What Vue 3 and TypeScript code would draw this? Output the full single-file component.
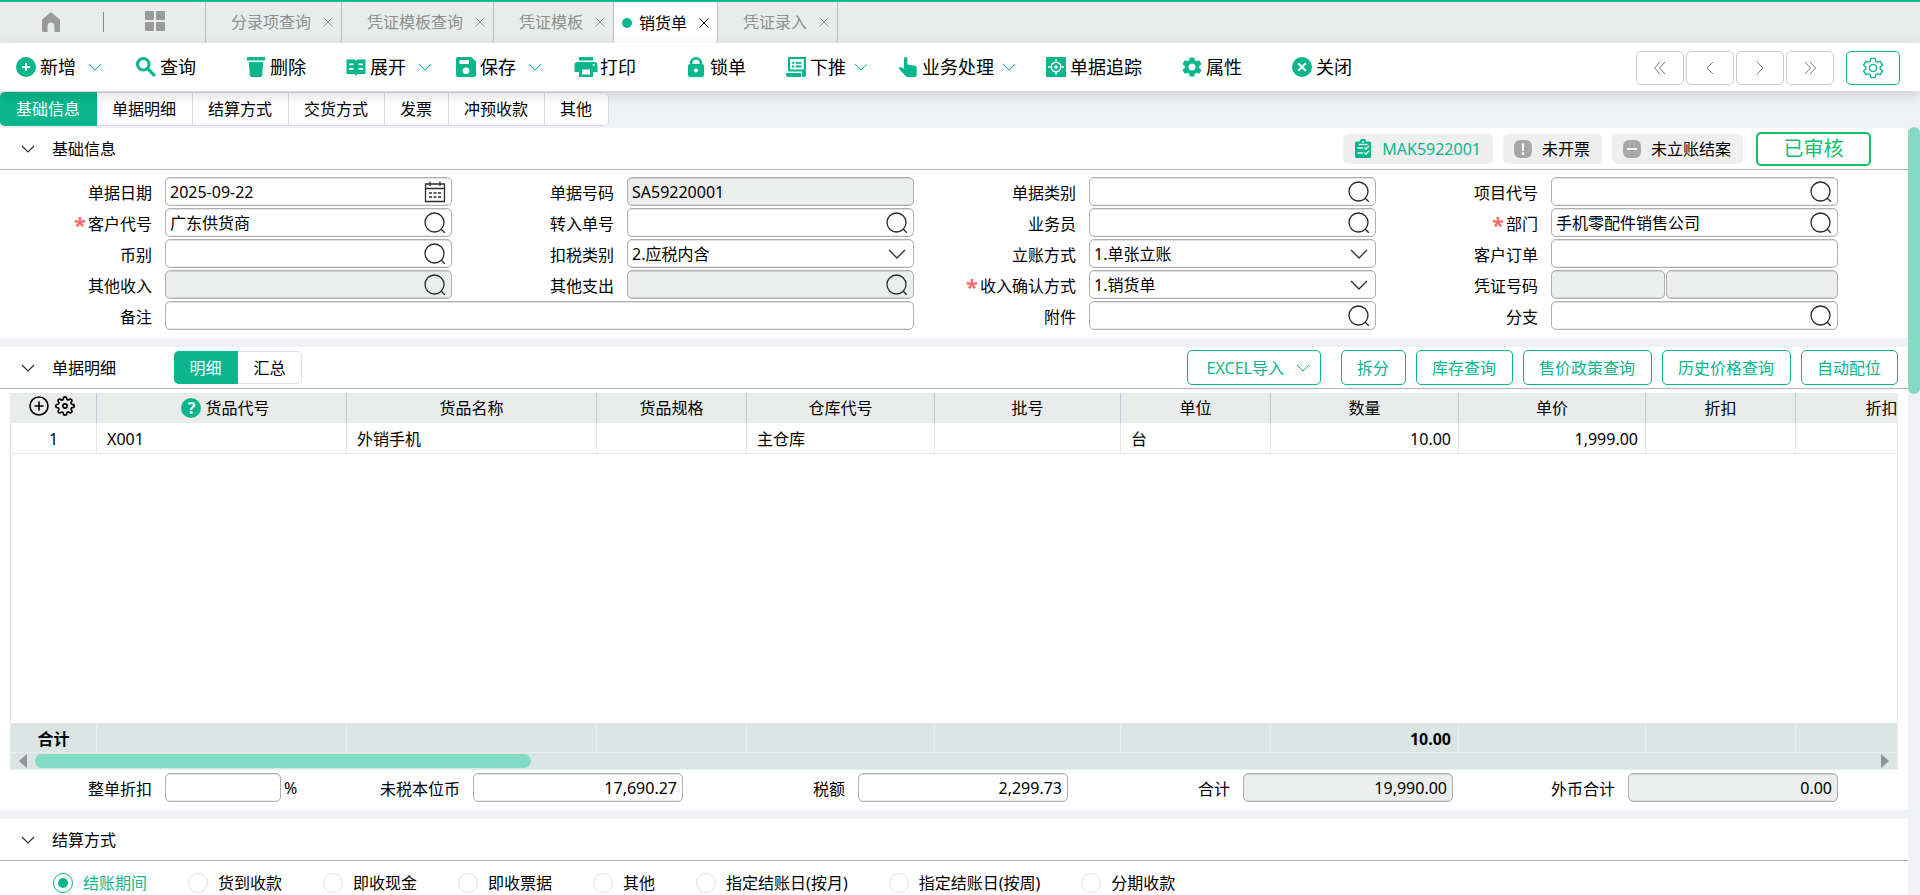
<script setup lang="ts">
import { ref } from 'vue'

interface PageTab { title: string; active?: boolean }
interface Tool { label: string; icon: string; space: string; chevron?: 'wide' | 'narrow' }
interface Field {
  id: string
  label: string
  value?: string
  kind?: 'text' | 'search' | 'date' | 'select' | 'pair'
  required?: boolean
  disabled?: boolean
  wide?: boolean
}
interface Column { title: string; width: number; value: string; align?: 'right' | 'center'; total?: string; help?: boolean }

const pageTabs: PageTab[] = [
  { title: '分录项查询' },
  { title: '凭证模板查询' },
  { title: '凭证模板' },
  { title: '销货单', active: true },
  { title: '凭证录入' },
]

const tools: Tool[] = [
  { label: '新增', icon: 'add', space: 'm', chevron: 'wide' },
  { label: '查询', icon: 'search', space: 'xl' },
  { label: '删除', icon: 'remove', space: 'l' },
  { label: '展开', icon: 'expand', space: 'xs', chevron: 'wide' },
  { label: '保存', icon: 'save', space: 'm', chevron: 'wide' },
  { label: '打印', icon: 'print', space: 'xl' },
  { label: '锁单', icon: 'lock', space: 'l' },
  { label: '下推', icon: 'push', space: 's', chevron: 'narrow' },
  { label: '业务处理', icon: 'hand', space: 's', chevron: 'narrow' },
  { label: '单据追踪', icon: 'track', space: 'l' },
  { label: '属性', icon: 'gear', space: 'xl' },
  { label: '关闭', icon: 'close', space: 'xs' },
]

const gearPath =
  'M19.14 12.94c.04-.3.06-.61.06-.94 0-.32-.02-.64-.07-.94l2.03-1.58c.18-.14.23-.41.12-.61l-1.92-3.32c-.12-.22-.37-.29-.59-.22l-2.39.96c-.5-.38-1.03-.7-1.62-.94l-.36-2.54c-.04-.24-.24-.41-.48-.41h-3.84c-.24 0-.43.17-.47.41l-.36 2.54c-.59.24-1.13.57-1.62.94l-2.39-.96c-.22-.08-.47 0-.59.22L2.74 8.87c-.12.21-.08.47.12.61l2.03 1.58c-.05.3-.09.63-.09.94s.02.64.07.94l-2.03 1.58c-.18.14-.23.41-.12.61l1.92 3.32c.12.22.37.29.59.22l2.39-.96c.5.38 1.03.7 1.62.94l.36 2.54c.05.24.24.41.48.41h3.84c.24 0 .44-.17.47-.41l.36-2.54c.59-.24 1.13-.56 1.62-.94l2.39.96c.22.08.47 0 .59-.22l1.92-3.32c.12-.22.07-.47-.12-.61l-2.01-1.58zM12 15.6c-1.98 0-3.6-1.62-3.6-3.6s1.62-3.6 3.6-3.6 3.6 1.62 3.6 3.6-1.62 3.6-3.6 3.6z'

const icons: Record<string, string[]> = {
  add: ['M12 2a10 10 0 1 0 0 20a10 10 0 0 0 0-20zM11 8h2v3h3v2h-3v3h-2v-3H8v-2h3z'],
  search: [
    'M9.3 2a7.3 7.3 0 1 0 0 14.6a7.3 7.3 0 0 0 0-14.6zM9.3 5a4.3 4.3 0 1 1 0 8.6a4.3 4.3 0 0 1 0-8.6z',
    'M14.8 12.5l7.2 7.3-2.2 2.2-7.3-7.2z',
  ],
  remove: ['M3 2h18v3.5H3z', 'M4.8 7h14.4l-1 13a2 2 0 0 1-2 2H7.8a2 2 0 0 1-2-2z'],
  expand: [
    'M2.5 4.5h8L12 5.8l1.5-1.3h8v14.5h-8L12 21l-1.5-2h-8zM5 8.5v1.8h4.5V8.5zM5 13v1.8h4.5V13zM14.5 8.5v1.8H19V8.5zM14.5 13v1.8H19V13z',
  ],
  save: [
    'M4 2h13.5L22 6.5V20a2 2 0 0 1-2 2H4a2 2 0 0 1-2-2V4a2 2 0 0 1 2-2zM5.5 5v4h9.5V5zM12 12.5a3.3 3.3 0 1 0 0 6.6a3.3 3.3 0 0 0 0-6.6z',
  ],
  print: [
    'M5 2h14v3.5H5z',
    'M3.5 7h17a3 3 0 0 1 3 3v7H19v5H5v-5H.5v-7a3 3 0 0 1 3-3zM8 14.5v5h8v-5zM18.8 9v1.8h1.8V9z',
  ],
  lock: [
    'M6 9h12a2 2 0 0 1 2 2v9a2 2 0 0 1-2 2H6a2 2 0 0 1-2-2v-9a2 2 0 0 1 2-2zM12 13.5a2 2 0 1 0 0 4a2 2 0 0 0 0-4z',
    'M5.8 9V8.2a6.2 6.2 0 0 1 12.4 0V9h-2.6v-.8a3.6 3.6 0 0 0-7.2 0V9z',
  ],
  push: [
    'M4 2h18v18a2 2 0 0 1-2 2h-2v-5.5H4zM6.2 4v10.5h13.6V4z',
    'M2 18h15v4H4a2 2 0 0 1-2-2z',
    'M8 7h2v1.8H8zM11.5 7h6v1.8h-6zM8 10.6h2v1.8H8zM11.5 10.6h6v1.8h-6z',
  ],
  hand: [
    'M8 3.7a1.7 1.7 0 0 1 3.4 0V9.5l7.6 1.2a2 2 0 0 1 1.7 2.1V20a2 2 0 0 1-2 2h-7.2a2.5 2.5 0 0 1-1.9-.9L3.3 14.3a1.4 1.4 0 0 1 1.7-2.1L8 13.8z',
  ],
  track: [
    'M2 2h20v20H2zM12 6.5a5.5 5.5 0 1 0 0 11a5.5 5.5 0 0 0 0-11zM12 8a4 4 0 1 1 0 8a4 4 0 0 1 0-8zM12 9.8L9.8 12l2.2 2.2 2.2-2.2zM11.3 4v2.5h1.4V4zM11.3 17.5V20h1.4v-2.5zM4 11.3v1.4h2.5v-1.4zM17.5 11.3v1.4H20v-1.4z',
  ],
  gear: [gearPath],
  close: [
    'M12 2a10 10 0 1 0 0 20a10 10 0 0 0 0-20zM8.9 7.5L12 10.6l3.1-3.1 1.4 1.4-3.1 3.1 3.1 3.1-1.4 1.4-3.1-3.1-3.1 3.1-1.4-1.4 3.1-3.1-3.1-3.1z',
  ],
}

const anchors = ['基础信息', '单据明细', '结算方式', '交货方式', '发票', '冲预收款', '其他']
const activeAnchor = ref('基础信息')

const pagers = [
  { label: '首张', d: 'M8 2L2.5 8L8 14M13 2L7.5 8L13 14' },
  { label: '上一张', d: 'M11 2L5 8L11 14' },
  { label: '下一张', d: 'M5 2L11 8L5 14' },
  { label: '末张', d: 'M3 2L8.5 8L3 14M8 2L13.5 8L8 14' },
]

const fields = ref<Field[]>([
  { id: 'bill-date', label: '单据日期', kind: 'date', value: '2025-09-22' },
  { id: 'bill-no', label: '单据号码', value: 'SA59220001', disabled: true },
  { id: 'bill-type', label: '单据类别', kind: 'search' },
  { id: 'project', label: '项目代号', kind: 'search' },
  { id: 'customer', label: '客户代号', kind: 'search', value: '广东供货商', required: true },
  { id: 'source-no', label: '转入单号', kind: 'search' },
  { id: 'salesman', label: '业务员', kind: 'search' },
  { id: 'department', label: '部门', kind: 'search', value: '手机零配件销售公司', required: true },
  { id: 'currency', label: '币别', kind: 'search' },
  { id: 'tax-type', label: '扣税类别', kind: 'select', value: '2.应税内含' },
  { id: 'account-mode', label: '立账方式', kind: 'select', value: '1.单张立账' },
  { id: 'customer-order', label: '客户订单' },
  { id: 'other-income', label: '其他收入', kind: 'search', disabled: true },
  { id: 'other-expense', label: '其他支出', kind: 'search', disabled: true },
  { id: 'income-confirm', label: '收入确认方式', kind: 'select', value: '1.销货单', required: true },
  { id: 'voucher', label: '凭证号码', kind: 'pair', disabled: true },
  { id: 'remark', label: '备注', wide: true },
  { id: 'attachment', label: '附件', kind: 'search' },
  { id: 'branch', label: '分支', kind: 'search' },
])

const columns: Column[] = [
  { title: '货品代号', width: 250, value: 'X001', help: true },
  { title: '货品名称', width: 250, value: '外销手机' },
  { title: '货品规格', width: 150, value: '' },
  { title: '仓库代号', width: 188, value: '主仓库' },
  { title: '批号', width: 186, value: '' },
  { title: '单位', width: 150, value: '台' },
  { title: '数量', width: 188, value: '10.00', align: 'right', total: '10.00' },
  { title: '单价', width: 187, value: '1,999.00', align: 'right' },
  { title: '折扣', width: 150, value: '' },
  { title: '折扣', width: 172, value: '' },
]

const detailActions = ['拆分', '库存查询', '售价政策查询', '历史价格查询', '自动配位']

const sums = ref([
  { id: 'untaxed', label: '未税本位币', value: '17,690.27', disabled: false },
  { id: 'tax', label: '税额', value: '2,299.73', disabled: false },
  { id: 'total', label: '合计', value: '19,990.00', disabled: true },
  { id: 'foreign', label: '外币合计', value: '0.00', disabled: true },
])
const discount = ref('')

const settlements = ['结账期间', '货到收款', '即收现金', '即收票据', '其他', '指定结账日(按月)', '指定结账日(按周)', '分期收款']
const settlement = ref('结账期间')
</script>

<template>
  <div class="page">
    <nav class="page-tabs">
      <button class="nav-icon home" aria-label="首页">
        <svg width="22" height="22" viewBox="0 0 22 22"><path d="M11 1L20 8.5V20a1 1 0 0 1-1 1h-4.5v-6a3.5 3.5 0 0 0-7 0v6H3a1 1 0 0 1-1-1V8.5z" /></svg>
      </button>
      <span class="nav-line"></span>
      <button class="nav-icon apps" aria-label="应用">
        <svg width="22" height="22" viewBox="0 0 22 22"><rect x="1" y="1" width="9" height="9" rx="1" /><rect x="12" y="1" width="9" height="9" rx="1" /><rect x="1" y="12" width="9" height="9" rx="1" /><rect x="12" y="12" width="9" height="9" rx="1" /></svg>
      </button>
      <div class="tab-list">
        <div v-for="tab in pageTabs" :key="tab.title" class="page-tab" :class="{ active: tab.active }">
          <span v-if="tab.active" class="dot"></span>
          <a href="#">{{ tab.title }}</a>
          <button class="tab-close" :aria-label="'关闭' + tab.title">
            <svg width="10" height="10" viewBox="0 0 10 10"><path d="M.5 .5l9 9M9.5 .5l-9 9" /></svg>
          </button>
        </div>
      </div>
    </nav>

    <header class="toolbar">
      <button v-for="tool in tools" :key="tool.label" class="tool" :class="'space-' + tool.space">
        <svg class="tool-icon" width="24" height="24" viewBox="0 0 24 24">
          <path v-for="d in icons[tool.icon]" :key="d" :d="d" fill-rule="evenodd" />
        </svg>
        <span>{{ tool.label }}</span>
        <svg v-if="tool.chevron" class="chevron" :class="tool.chevron" width="14" height="8" viewBox="0 0 14 8"><path d="M1 1l6 6 6-6" /></svg>
      </button>
      <div class="pagers">
        <button v-for="p in pagers" :key="p.label" class="pager" :aria-label="p.label">
          <svg width="16" height="16" viewBox="0 0 16 16"><path :d="p.d" /></svg>
        </button>
      </div>
      <button class="settings" aria-label="设置">
        <svg width="24" height="24" viewBox="0 0 24 24"><path :d="gearPath" /></svg>
      </button>
    </header>

    <main class="body">
      <div class="content">
        <div class="anchors">
          <button v-for="a in anchors" :key="a" :class="{ active: a === activeAnchor }" @click="activeAnchor = a">{{ a }}</button>
        </div>

        <section class="panel">
          <div class="panel-head">
            <button class="fold" aria-label="收起基础信息"><svg width="14" height="8" viewBox="0 0 14 8"><path d="M1 1l6 6 6-6" /></svg></button>
            <h2>基础信息</h2>
            <div class="badges">
              <a href="#" class="badge link">
                <svg width="18" height="20" viewBox="0 0 18 20">
                  <path fill-rule="evenodd" d="M6 2.5a3 3 0 0 1 6 0h3.5A1.5 1.5 0 0 1 17 4v13.5a1.5 1.5 0 0 1-1.5 1.5h-13A1.5 1.5 0 0 1 1 17.5V4a1.5 1.5 0 0 1 1.5-1.5zM8 2.2v1.5h2V2.2z" />
                  <path class="mark" d="M3.5 9H9M3.5 14H9M10.5 8.5l1.5 1.5 3-3M10.5 13.5l1.5 1.5 3-3" />
                  <path class="mark" d="M4.5 5.5h9" />
                </svg>
                <span>MAK5922001</span>
              </a>
              <span class="badge">
                <svg width="18" height="18" viewBox="0 0 18 18"><rect width="18" height="18" rx="6" fill="#a8a8a8" /><path d="M7.8 3.5h2.4l-.4 7.5H8.2z" fill="#fff" /><circle cx="9" cy="13.5" r="1.3" fill="#fff" /></svg>
                <span>未开票</span>
              </span>
              <span class="badge">
                <svg width="18" height="18" viewBox="0 0 18 18"><rect width="18" height="18" rx="6" fill="#a8a8a8" /><rect x="4" y="8" width="10" height="2" fill="#fff" /></svg>
                <span>未立账结案</span>
              </span>
              <span class="stamp">已审核</span>
            </div>
          </div>

          <form class="form-grid" @submit.prevent>
            <div v-for="f in fields" :key="f.id" class="field" :class="{ wide: f.wide }">
              <label :for="f.id"><span v-if="f.required" class="star">*</span>{{ f.label }}</label>
              <div v-if="f.kind === 'pair'" class="pair">
                <div class="box disabled"><input :id="f.id" type="text" disabled /></div>
                <div class="box disabled"><input type="text" :aria-label="f.label + '后段'" disabled /></div>
              </div>
              <div v-else-if="f.kind === 'select'" class="box choose">
                <select :id="f.id"><option>{{ f.value }}</option></select>
                <svg width="18" height="10" viewBox="0 0 18 10"><path d="M1 1l8 8 8-8" /></svg>
              </div>
              <div v-else class="box" :class="{ disabled: f.disabled }">
                <input :id="f.id" v-model="f.value" type="text" :disabled="f.disabled" />
                <button v-if="f.kind === 'search'" type="button" :aria-label="'选择' + f.label">
                  <svg width="22" height="22" viewBox="0 0 22 22"><circle cx="10.5" cy="10.5" r="9.5" /><path d="M17.3 17.3l3.5 3.5" /></svg>
                </button>
                <button v-if="f.kind === 'date'" type="button" :aria-label="'选择' + f.label">
                  <svg width="22" height="22" viewBox="0 0 22 22"><path d="M1.5 3h19v17.5h-19zM1.5 7.5h19M6 .5v4.5M16 .5v4.5" /><path stroke-dasharray="3 1.5" d="M5 12h13M5 16h13" /></svg>
                </button>
              </div>
            </div>
          </form>
        </section>

        <section class="panel">
          <div class="panel-head">
            <button class="fold" aria-label="收起单据明细"><svg width="14" height="8" viewBox="0 0 14 8"><path d="M1 1l6 6 6-6" /></svg></button>
            <h2>单据明细</h2>
            <div class="segment">
              <button class="active">明细</button>
              <button>汇总</button>
            </div>
            <div class="actions">
              <button class="excel">EXCEL导入 <svg width="14" height="8" viewBox="0 0 14 8"><path d="M1 1l6 6 6-6" /></svg></button>
              <button v-for="a in detailActions" :key="a">{{ a }}</button>
            </div>
          </div>

          <div class="grid-wrap">
            <table>
              <colgroup>
                <col class="col-index" />
                <col v-for="(c, i) in columns" :key="i" :style="{ width: c.width + 'px' }" />
              </colgroup>
              <thead>
                <tr>
                  <th>
                    <div class="head-tools">
                      <button aria-label="新增行"><svg width="20" height="20" viewBox="0 0 20 20"><circle cx="10" cy="10" r="9" /><path d="M10 5.5v9M5.5 10h9" /></svg></button>
                      <button aria-label="列设置">
                        <svg class="cog" width="20" height="20" viewBox="0 0 24 24"><circle cx="12" cy="12" r="2.5" /><path d="M19.4 15a1.65 1.65 0 0 0 .33 1.82l.06.06a2 2 0 0 1 0 2.83 2 2 0 0 1-2.83 0l-.06-.06a1.65 1.65 0 0 0-1.82-.33 1.65 1.65 0 0 0-1 1.51V21a2 2 0 0 1-2 2 2 2 0 0 1-2-2v-.09A1.65 1.65 0 0 0 9 19.4a1.65 1.65 0 0 0-1.82.33l-.06.06a2 2 0 0 1-2.83 0 2 2 0 0 1 0-2.83l.06-.06a1.65 1.65 0 0 0 .33-1.82 1.65 1.65 0 0 0-1.51-1H3a2 2 0 0 1-2-2 2 2 0 0 1 2-2h.09A1.65 1.65 0 0 0 4.6 9a1.65 1.65 0 0 0-.33-1.82l-.06-.06a2 2 0 0 1 0-2.83 2 2 0 0 1 2.83 0l.06.06a1.65 1.65 0 0 0 1.82.33H9a1.65 1.65 0 0 0 1-1.51V3a2 2 0 0 1 2-2 2 2 0 0 1 2 2v.09a1.65 1.65 0 0 0 1 1.51 1.65 1.65 0 0 0 1.82-.33l.06-.06a2 2 0 0 1 2.83 0 2 2 0 0 1 0 2.83l-.06.06a1.65 1.65 0 0 0-.33 1.82V9a1.65 1.65 0 0 0 1.51 1H21a2 2 0 0 1 2 2 2 2 0 0 1-2 2h-.09a1.65 1.65 0 0 0-1.51 1z" /></svg>
                      </button>
                    </div>
                  </th>
                  <th v-for="(c, i) in columns" :key="i">
                    <div v-if="c.help" class="with-help"><button class="help" aria-label="帮助">?</button>{{ c.title }}</div>
                    <template v-else>{{ c.title }}</template>
                  </th>
                </tr>
              </thead>
              <tbody>
                <tr>
                  <td class="center">1</td>
                  <td v-for="(c, i) in columns" :key="i" :class="c.align">{{ c.value }}</td>
                </tr>
                <tr class="filler"><td colspan="11"></td></tr>
              </tbody>
              <tfoot>
                <tr>
                  <td class="center">合计</td>
                  <td v-for="(c, i) in columns" :key="i" :class="c.align">{{ c.total }}</td>
                </tr>
              </tfoot>
            </table>
            <div class="h-scroll">
              <svg width="8" height="14" viewBox="0 0 8 14"><path d="M8 0v14L0 7z" /></svg>
              <div class="h-track"><div class="h-thumb"></div></div>
              <svg width="8" height="14" viewBox="0 0 8 14"><path d="M0 0v14l8-7z" /></svg>
            </div>
          </div>

          <form class="sums" @submit.prevent>
            <div class="sum first">
              <label for="discount">整单折扣</label>
              <div class="box"><input id="discount" v-model="discount" type="text" /></div>
              <span>%</span>
            </div>
            <div v-for="s in sums" :key="s.id" class="sum">
              <label :for="s.id">{{ s.label }}</label>
              <div class="box" :class="{ disabled: s.disabled }"><input :id="s.id" v-model="s.value" type="text" :disabled="s.disabled" /></div>
            </div>
          </form>
        </section>

        <section class="panel last">
          <div class="panel-head">
            <button class="fold" aria-label="收起结算方式"><svg width="14" height="8" viewBox="0 0 14 8"><path d="M1 1l6 6 6-6" /></svg></button>
            <h2>结算方式</h2>
          </div>
          <div class="radios">
            <label v-for="s in settlements" :key="s" :class="{ checked: s === settlement }">
              <input v-model="settlement" type="radio" name="settlement" :value="s" />{{ s }}
            </label>
          </div>
        </section>
      </div>
      <div class="v-scroll"><div class="v-thumb"></div></div>
    </main>
  </div>
</template>

<style>
body { margin: 0; }
</style>

<style scoped>
.page {
  --green: #0ab68c;
  display: flex;
  flex-direction: column;
  min-height: 100vh;
  background: #eff1f5;
  color: #000;
  font: 16px/24px "Noto Sans", "Noto Sans CJK SC", sans-serif;
}
.page *, .page *::before { box-sizing: border-box; }
button {
  margin: 0;
  padding: 0;
  border: 0;
  background: none;
  color: inherit;
  font: inherit;
  white-space: nowrap;
  cursor: pointer;
}
a { color: inherit; text-decoration: none; }
svg { display: block; flex: none; }
input, select { font: inherit; color: #000; }

.page-tabs {
  display: flex;
  align-items: center;
  height: 43px;
  border-top: 2px solid var(--green);
  border-bottom: 1px solid #eceeed;
  background: #e8eceb;
}
.nav-icon svg { fill: #9a9a9a; }
.home { margin-left: 40px; }
.nav-line { width: 1px; height: 20px; margin: 0 40px 0 41px; background: #8a8a8a; }
.apps { margin-bottom: 3px; }
.tab-list { display: flex; align-self: stretch; margin-left: 39px; border-left: 1px solid #bcc0c4; }
.page-tab {
  display: flex;
  align-items: center;
  padding: 0 8px 0 25px;
  border-right: 1px solid #bcc0c4;
  border-radius: 0 0 3px;
  color: #8e9090;
}
.page-tab.active { gap: 7px; margin-bottom: -1px; padding-left: 8px; background: #fff; color: #000; }
.page-tab.active .tab-close { margin-left: 5px; }
.tab-close { margin-left: 12px; }
.tab-close svg { fill: none; stroke: currentColor; }
.dot { width: 10px; height: 10px; border-radius: 50%; background: var(--green); }

.toolbar {
  position: relative;
  z-index: 1;
  display: flex;
  align-items: center;
  height: 48px;
  padding: 0 20px 0 14px;
  background: #fff;
  box-shadow: 0 4px 12px rgba(0, 0, 0, 0.14);
}
.tool { display: flex; align-items: center; font-size: 18px; }
.tool-icon { margin-right: 2px; fill: var(--green); }
.chevron { fill: none; stroke: var(--green); stroke-width: 1; }
.chevron.wide { margin-left: 12px; }
.chevron.narrow { margin-left: 8px; }
.space-xs { margin-right: 22px; }
.space-s { margin-right: 28px; }
.space-m { margin-right: 32px; }
.space-l { margin-right: 38px; }
.space-xl { margin-right: 48px; }
.pagers { display: flex; gap: 2px; margin-left: auto; }
.pager, .settings {
  display: flex;
  align-items: center;
  justify-content: center;
  width: 48px;
  height: 34px;
  border: 1px solid #ccc;
  border-radius: 5px;
}
.pagers, .settings { margin-top: 2px; }
.pager svg { fill: none; stroke: #777; }
.settings { width: 54px; margin-left: 12px; border-color: var(--green); }
.settings svg { fill: none; stroke: var(--green); stroke-width: 1.4; }

.body { display: flex; flex: 1; }
.content { display: flex; flex: 1; flex-direction: column; min-width: 0; }
.v-scroll { width: 12px; padding-top: 36px; }
.v-thumb { height: 267px; border-radius: 6px; background: #83dbc6; }

.anchors { display: flex; padding: 1px 0 2px; }
.anchors button {
  height: 34px;
  padding: 0 16px 0 15px;
  border: 1px solid #d9dce6;
  border-left: 0;
  background: #fff;
}
.anchors button:first-child { padding-left: 16px; border-radius: 5px 0 0 5px; }
.anchors button:last-child { border-radius: 0 5px 5px 0; }
.anchors button.active { border-color: var(--green); background: var(--green); color: #fff; }

.panel { margin-bottom: 9px; background: #fff; }
.panel.last { flex: 1; margin-bottom: 0; }
.panel-head {
  display: flex;
  align-items: center;
  height: 42px;
  padding-left: 21px;
  border-bottom: 1px solid #b2b3b3;
}
.fold svg { fill: none; stroke: #333; stroke-width: 1.2; }
h2 { margin: 0 0 0 17px; font-size: 16px; font-weight: 400; }

.badges { display: flex; align-items: center; gap: 10px; margin-left: auto; padding-right: 37px; }
.badge {
  display: flex;
  align-items: center;
  gap: 10px;
  height: 30px;
  padding: 0 12px 0 11px;
  border-radius: 5px;
  background: #efefef;
}
.badge.link { color: var(--green); }
.badge.link svg { fill: var(--green); }
.mark { fill: none; stroke: #efefef; stroke-width: 1.4; }
.stamp {
  width: 115px;
  height: 34px;
  margin-left: 3px;
  border: 2px solid #13bf63;
  border-radius: 5px;
  color: #13bf63;
  font-size: 20px;
  line-height: 30px;
  text-align: center;
}

.form-grid {
  display: grid;
  grid-template-columns: repeat(4, minmax(0, 1fr));
  gap: 2px 10px;
  padding: 7px 70px 8px 0;
}
.field { display: grid; grid-template-columns: 152px minmax(0, 1fr); gap: 13px; align-items: center; }
.field.wide { grid-column: span 2; }
.field label { display: flex; justify-content: flex-end; padding-top: 2px; white-space: nowrap; }
.star { margin-right: 2px; color: #f56c6c; font-size: 22px; font-weight: 700; }
.box {
  display: flex;
  align-items: center;
  height: 29px;
  padding: 0 5px 0 4px;
  border: 1px solid #b0b0b0;
  border-radius: 5px;
  background: #fff;
  box-shadow: inset 0 1px 0 #e2e2e2, inset 0 -1px 0 #ececec;
}
.box.disabled { background: #ebeeed; box-shadow: inset 0 1px 0 #d2d4d4, inset 0 -1px 0 #d8dada; }
.box input { flex: 1; width: 0; min-width: 0; height: 24px; padding: 0; border: 0; outline: 0; background: transparent; }
.box svg { fill: none; stroke: #2c2c2c; stroke-width: 1.3; }
.choose { display: grid; grid-template-columns: 1fr; }
.choose select, .choose svg { grid-area: 1 / 1; }
.choose select { width: 100%; height: 24px; padding: 0; border: 0; outline: 0; background: transparent; appearance: none; }
.choose svg { justify-self: end; margin-right: 2px; pointer-events: none; }
.pair { display: grid; grid-template-columns: 2fr 3fr; gap: 1px; }

.segment { display: flex; margin-left: 58px; }
.segment button { width: 64px; height: 33px; border: 1px solid #dcdfe6; border-left: 0; border-radius: 0 5px 5px 0; }
.segment .active { border-color: var(--green); border-radius: 5px 0 0 5px; background: var(--green); color: #fff; }
.actions { display: flex; gap: 10px; margin-left: auto; padding-right: 10px; }
.actions button { height: 35px; padding: 0 16px 0 15px; border: 1px solid var(--green); border-radius: 5px; color: var(--green); }
.actions .excel { display: flex; align-items: center; gap: 12px; margin-right: 10px; padding: 0 10px 0 19px; }
.excel svg { fill: none; stroke: var(--green); }

.grid-wrap { margin: 4px 10px 3px; overflow: hidden; border: solid #e6e9ec; border-width: 0 1px; }
table { width: 1957px; border-collapse: separate; border-spacing: 0; table-layout: fixed; }
.col-index { width: 86px; }
th, td { padding: 0 7px 0 10px; white-space: nowrap; text-align: left; }
th { height: 30px; padding: 0; border-right: 1px solid #c5c9dc; background: #e9eceb; font-weight: 400; text-align: center; }
td { height: 31px; padding-top: 2px; border-right: 1px solid #e5e7ea; border-bottom: 1px solid #e5e7ea; }
td.right { text-align: right; }
td.center { padding: 2px 0 0; text-align: center; }
.filler td { height: 270px; border-right: 0; }
tfoot td { height: 29px; border-color: #e9edee; background: #dbe5e3; font-weight: 700; }
.head-tools { display: flex; justify-content: center; gap: 6px; padding-right: 3px; padding-bottom: 4px; }
.head-tools svg { fill: none; stroke: #000; stroke-width: 1.6; }
.head-tools .cog { stroke-width: 2; }
.with-help { display: flex; align-items: center; justify-content: center; gap: 4px; padding-left: 8px; }
.help { width: 20px; height: 20px; border-radius: 50%; background: var(--green); color: #fff; font-size: 16px; font-weight: 700; line-height: 20px; }
.h-scroll { display: flex; align-items: center; gap: 8px; height: 17px; padding: 0 8px; border-bottom: 1px solid #e9edee; background: #dbe5e3; }
.h-scroll svg { fill: #8f9396; }
.h-track { flex: 1; }
.h-thumb { width: 27%; height: 14px; border-radius: 7px; background: #83dbc6; }

.sums { display: grid; grid-template-columns: 298px repeat(4, minmax(0, 1fr)); padding: 0 70px 8px 0; }
.sum { display: grid; grid-template-columns: 162px minmax(0, 1fr); gap: 13px; align-items: center; }
.sum label { padding-top: 2px; text-align: right; }
.sum input { text-align: right; }
.sum.first { grid-template-columns: 162px minmax(0, 1fr) 14px; gap: 3px; }
.sum.first label { padding-right: 10px; }

.radios { display: flex; gap: 41px; padding: 12px 0 2px 53px; }
.radios label { display: flex; align-items: center; gap: 10px; height: 20px; white-space: nowrap; }
.radios .checked { color: var(--green); }
.radios input {
  display: grid;
  place-items: center;
  width: 20px;
  height: 20px;
  margin: 0;
  border: 1px solid #dcdfe6;
  border-radius: 50%;
  appearance: none;
}
.radios input:checked { border-color: var(--green); }
.radios input:checked::before { width: 10px; height: 10px; border-radius: 50%; background: var(--green); content: ""; }
</style>
